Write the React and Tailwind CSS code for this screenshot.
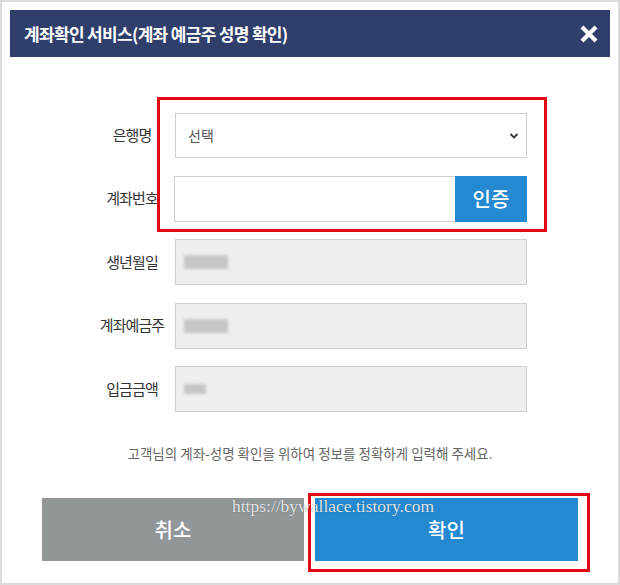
import React from "react";

const rows = [
  { label: "생년월일", blur: [44, 14] },
  { label: "계좌예금주", blur: [44, 14] },
  { label: "입금금액", blur: [22, 10] },
];

function Label({ children }) {
  return (
    <div className="w-[66px] shrink-0 mr-[10px] text-center text-[15px] text-[#333] whitespace-nowrap tracking-[-0.06em]">
      {children}
    </div>
  );
}

export default function App() {
  return (
    <div
      className="relative w-[620px] h-[585px] bg-white border-2 border-[#dcdcdc] overflow-hidden"
      style={{ fontFamily: '"Noto Sans CJK KR", "Noto Sans", sans-serif' }}
    >
      {/* 헤더 */}
      <header className="mx-[8px] mt-[8px] h-[47px] bg-[#2f3e6b] flex items-center justify-between pl-[14px] pr-[12px]">
        <h1 className="text-white text-[17px] font-bold tracking-[-0.04em]">
          계좌확인 서비스(계좌 예금주 성명 확인)
        </h1>
        <svg width="18" height="18" viewBox="0 0 18 18">
          <path d="M2 2 L16 16 M16 2 L2 16" stroke="#fff" strokeWidth="4.2" />
        </svg>
      </header>

      {/* 입력 폼 */}
      <div className="mt-[56px] pl-[97px] pr-[91px] flex flex-col gap-[17.5px]">
        <div className="flex items-center h-[45px]">
          <Label>은행명</Label>
          <div className="flex-1 h-full border border-[#cfcfcf] flex items-center justify-between pl-[12px] pr-[7px]">
            <span className="text-[14px] text-[#555]">선택</span>
            <svg width="10" height="8" viewBox="0 0 10 8">
              <path d="M1.5 2 L5 5.5 L8.5 2" stroke="#333" strokeWidth="1.8" fill="none" />
            </svg>
          </div>
        </div>
        <div className="flex items-center h-[46px]">
          <Label>계좌번호</Label>
          <div className="flex-1 h-full flex -ml-[1px]">
            <div className="flex-1 border border-[#cfcfcf] border-r-0"></div>
            <button className="w-[72px] h-full bg-[#2489d1] text-white text-[20px] font-medium">
              인증
            </button>
          </div>
        </div>
        {rows.map((r) => (
          <div key={r.label} className="flex items-center h-[46px]">
            <Label>{r.label}</Label>
            <div className="flex-1 h-full border border-[#cfcfcf] bg-[#efefef] flex items-center pl-[8px]">
              <div
                className="bg-[#c6c6c6] blur-[1.5px]"
                style={{ width: r.blur[0], height: r.blur[1] }}
              ></div>
            </div>
          </div>
        ))}
      </div>

      <p className="mt-[31px] text-center text-[13.5px] text-[#666]">
        고객님의 계좌-성명 확인을 위하여 정보를 정확하게 입력해 주세요.
      </p>

      {/* 버튼 */}
      <div className="mt-[35px] flex gap-[11px] pl-[40px]">
        <button className="w-[262px] h-[63px] bg-[#919699] text-white text-[20px] font-medium">
          취소
        </button>
        <button className="w-[263px] h-[63px] bg-[#2489d1] text-white text-[20px] font-medium">
          확인
        </button>
      </div>

      {/* 표시 */}
      <div className="absolute left-[155px] top-[95px] w-[390px] h-[135px] border-[3px] border-[#e30613]"></div>
      <div className="absolute left-[306px] top-[491px] w-[282px] h-[79px] border-[3px] border-[#e30613]"></div>

      <div
        className="absolute left-[230px] top-[491px] text-[17.5px] text-white/85 [text-shadow:0_0_1px_rgba(0,0,0,0.45)]"
        style={{ fontFamily: '"Liberation Serif", serif' }}
      >
        https://bywallace.tistory.com
      </div>
    </div>
  );
}
